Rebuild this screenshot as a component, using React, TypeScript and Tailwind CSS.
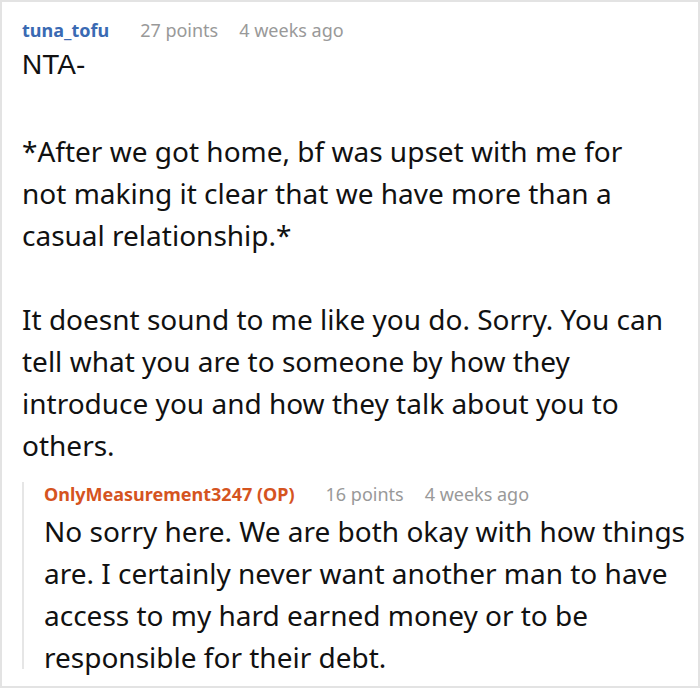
const noto = { fontFamily: '"Noto Sans", "Open Sans", sans-serif' };

function Meta({ name, nameClass, points, age }: { name: string; nameClass: string; points: string; age: string }) {
  return (
    <div className="flex items-center h-[24px] text-[18px] leading-[24px] whitespace-nowrap">
      <span className={`font-bold ${nameClass}`}>{name}</span>
      <span className="ml-[31px] text-[#999999]">{points}</span>
      <span className="ml-[21px] text-[#999999]">{age}</span>
    </div>
  );
}

export default function App() {
  return (
    <div className="w-[700px] h-[688px] bg-white border-2 border-[#e3e3e3] overflow-hidden" style={noto}>
      <div className="pl-[20px] pr-[8px] pt-[16px]">
        <Meta name="tuna_tofu" nameClass="text-[#3a6ab3]" points="27 points" age="4 weeks ago" />

        <div className="w-[646px] text-[28px] leading-[42px] text-[#111111]">
          <p className="mt-[2px]" style={{ fontFamily: '"Liberation Sans", Arial, sans-serif' }}>
            NTA-
          </p>
          <p className="mt-[44px]">
            *After we got home, bf was upset with me for not making it clear that we have more than a casual relationship.*
          </p>
          <p className="mt-[42px]">
            It doesnt sound to me like you do. Sorry. You can tell what you are to someone by how they introduce you and how they talk about you to others.
          </p>
        </div>

        {/* nested reply */}
        <div className="mt-[16px] h-[187px] border-l-2 border-[#e6e6e6] pl-[20px]">
          <Meta name="OnlyMeasurement3247 (OP)" nameClass="text-[#d5541f]" points="16 points" age="4 weeks ago" />
          <p className="mt-[4px] text-[28px] leading-[42px] text-[#111111]">
            No sorry here. We are both okay with how things are. I certainly never want another man to have access to my hard earned money or to be responsible for their debt.
          </p>
        </div>
      </div>
    </div>
  );
}
